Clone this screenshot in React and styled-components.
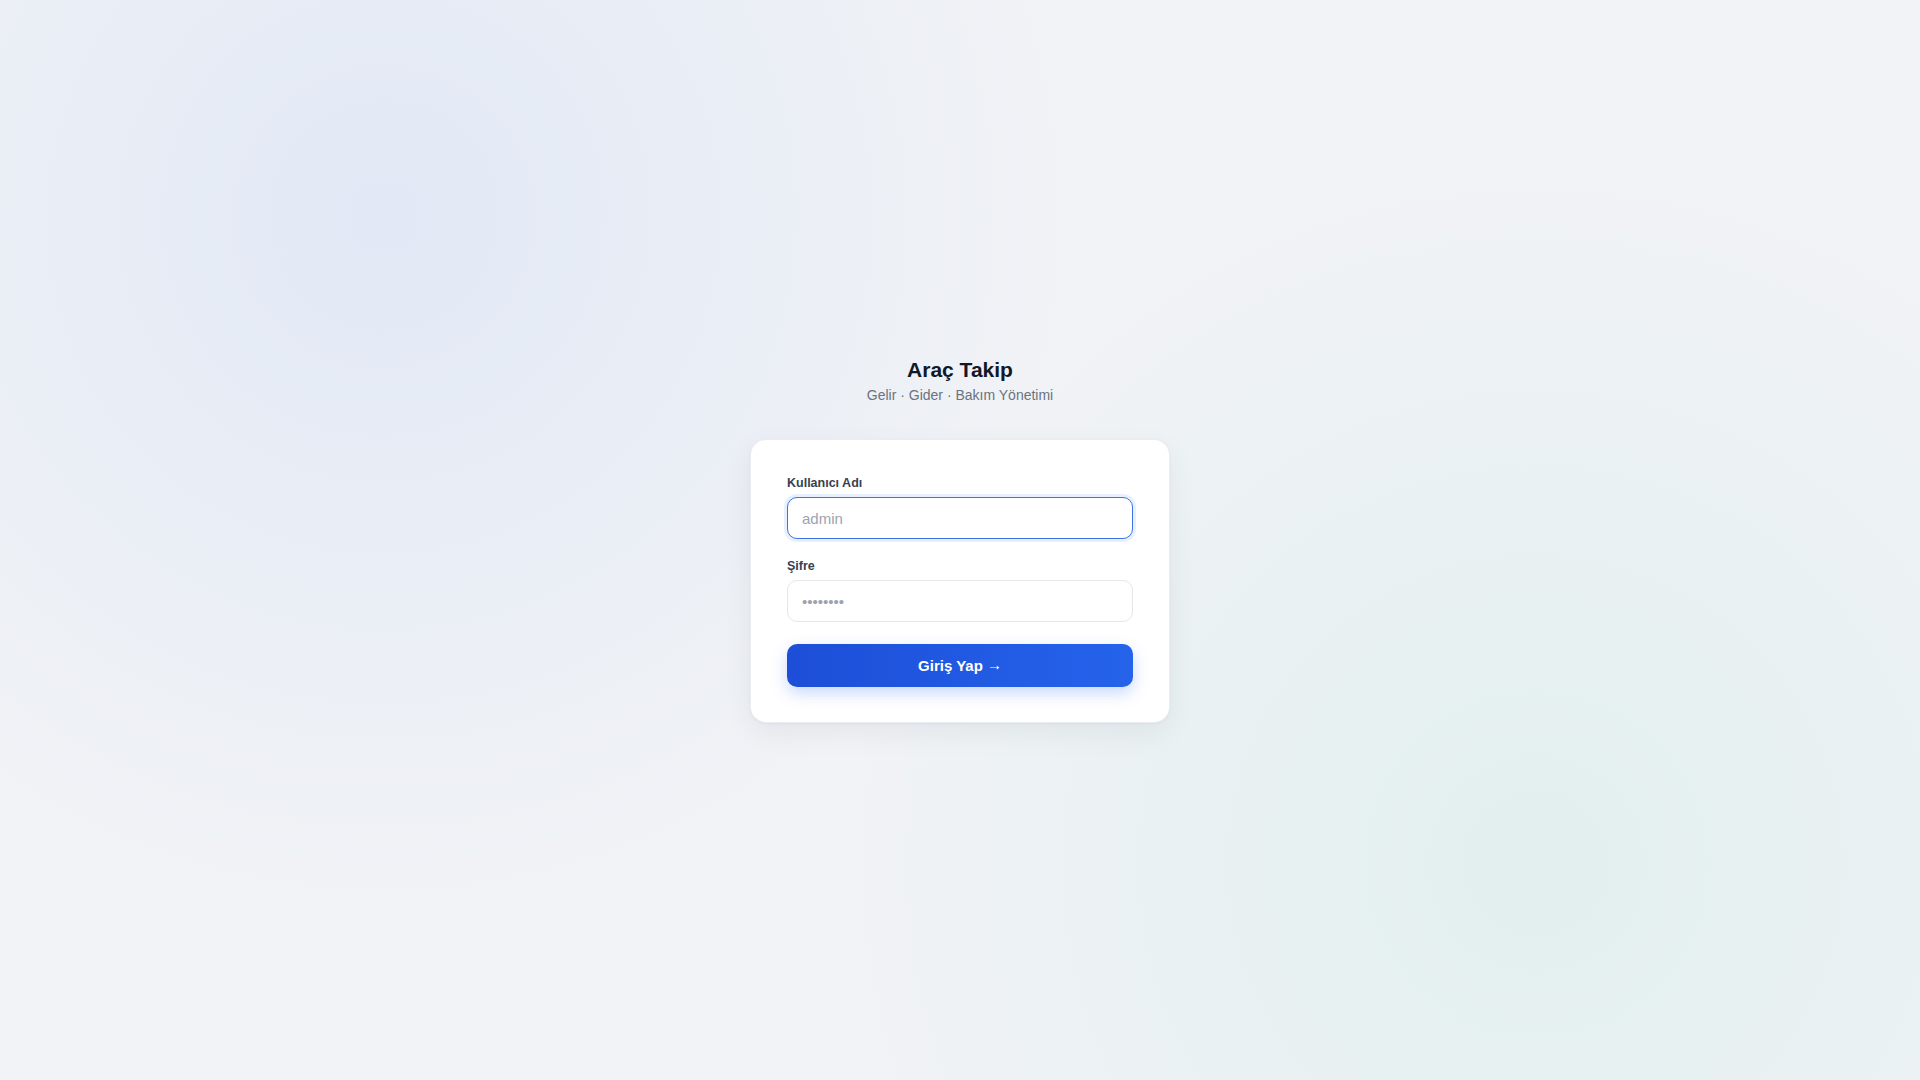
import React from "react";
import styled, { createGlobalStyle } from "styled-components";

const GlobalStyle = createGlobalStyle`
  * { box-sizing: border-box; }
  html, body { margin: 0; padding: 0; }
  body {
    font-family: "Liberation Sans", Arial, sans-serif;
    min-height: 100vh;
    background:
      radial-gradient(circle at 20% 20%, rgba(37, 99, 235, 0.075) 0, rgba(37, 99, 235, 0) 40%),
      radial-gradient(circle at 80% 80%, rgba(16, 185, 129, 0.065) 0, rgba(16, 185, 129, 0) 40%),
      #f1f3f6;
  }
`;

const Page = styled.main`
  min-height: 100vh;
  display: flex;
  align-items: center;
  justify-content: center;
`;

const Wrapper = styled.div`
  width: 420px;
  display: flex;
  flex-direction: column;
`;

const Header = styled.header`
  text-align: center;
  margin-bottom: 34px;
`;

const Title = styled.h1`
  margin: 0 0 4px;
  font-size: 21px;
  line-height: 1.2;
  font-weight: 700;
  color: #111827;
`;

const Subtitle = styled.p`
  margin: 0;
  font-size: 14px;
  line-height: 1.4;
  color: #6b7280;
`;

const Card = styled.form`
  background: #ffffff;
  border: 1px solid rgba(226, 232, 240, 0.8);
  border-radius: 16px;
  padding: 36px 36px 35px;
  box-shadow: 0 10px 30px rgba(15, 23, 42, 0.06), 0 1px 3px rgba(15, 23, 42, 0.04);
  display: flex;
  flex-direction: column;
`;

const Field = styled.div`
  display: flex;
  flex-direction: column;
  margin-bottom: ${(p) => p.$gap}px;
`;

const Label = styled.label`
  font-size: 12.5px;
  line-height: 1.2;
  font-weight: 700;
  color: #374151;
  margin-bottom: 6px;
`;

const Input = styled.input`
  height: 42px;
  width: 100%;
  padding: 0 14px;
  border: 1px solid #e5e7eb;
  border-radius: 10px;
  font-family: "Liberation Sans", Arial, sans-serif;
  font-size: 15px;
  color: #111827;
  background: #ffffff;
  outline: none;
  caret-color: #111827;
  &::placeholder { color: #9ca3af; }
  &:focus {
    border-color: #3b72e6;
    box-shadow: 0 0 0 3px rgba(59, 130, 246, 0.12);
  }
`;

const Button = styled.button`
  height: 43px;
  width: 100%;
  border: none;
  border-radius: 10px;
  background: linear-gradient(90deg, #1d4ed8 0%, #2563eb 100%);
  color: #ffffff;
  font-family: "Liberation Sans", Arial, sans-serif;
  font-size: 15px;
  font-weight: 700;
  cursor: pointer;
  box-shadow: 0 6px 16px rgba(37, 99, 235, 0.25);
`;

const Arrow = styled.span`
  display: inline-block;
  margin-left: 4px;
  font-weight: 400;
  font-size: 15px;
  transform: translateY(-1px);
`;

export default function App() {
  return (
    <>
      <GlobalStyle />
      <Page>
        <Wrapper>
          <Header>
            <Title>Araç Takip</Title>
            <Subtitle>Gelir · Gider · Bakım Yönetimi</Subtitle>
          </Header>
          <Card onSubmit={(e) => e.preventDefault()}>
            <Field $gap={20}>
              <Label htmlFor="username">Kullanıcı Adı</Label>
              <Input id="username" type="text" placeholder="admin" autoFocus />
            </Field>
            <Field $gap={22}>
              <Label htmlFor="password">Şifre</Label>
              <Input id="password" type="password" placeholder="••••••••" />
            </Field>
            <Button type="submit">
              Giriş Yap<Arrow>→</Arrow>
            </Button>
          </Card>
        </Wrapper>
      </Page>
    </>
  );
}
